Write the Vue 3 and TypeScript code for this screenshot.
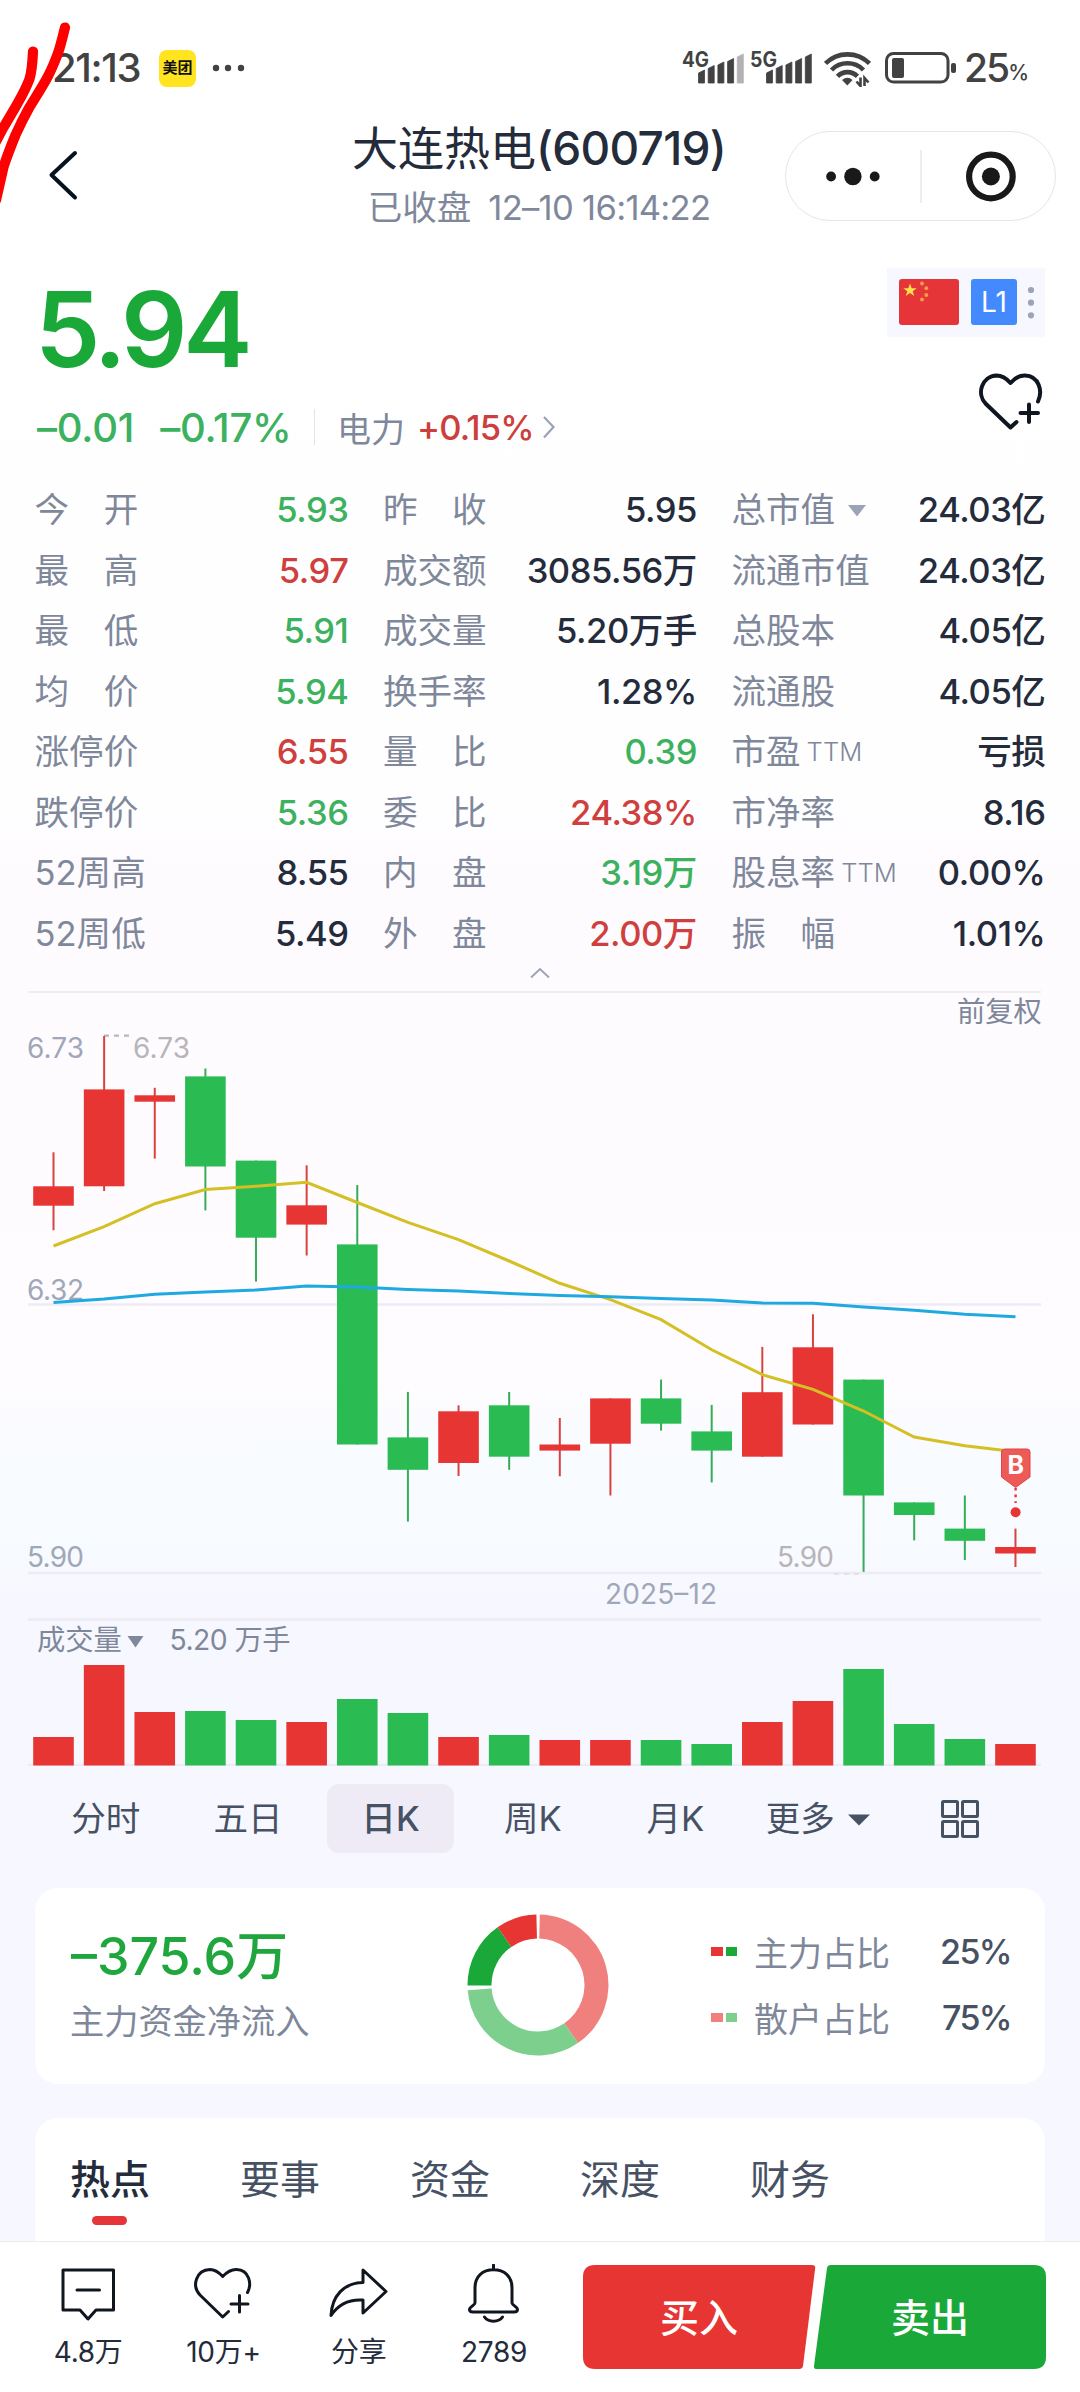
<script setup lang="ts">
type Tone = 'up' | 'down' | 'flat'

interface Stat {
  label: string
  value: string
  tone?: Tone
  suffix?: string
  menu?: boolean
}

interface Candle {
  up: boolean
  high: number
  top: number
  bottom: number
  low: number
  volume: number
}

const stats: Stat[] = [
  { label: '今　开', value: '5.93', tone: 'down' },
  { label: '昨　收', value: '5.95' },
  { label: '总市值', value: '24.03亿', menu: true },
  { label: '最　高', value: '5.97', tone: 'up' },
  { label: '成交额', value: '3085.56万' },
  { label: '流通市值', value: '24.03亿' },
  { label: '最　低', value: '5.91', tone: 'down' },
  { label: '成交量', value: '5.20万手' },
  { label: '总股本', value: '4.05亿' },
  { label: '均　价', value: '5.94', tone: 'down' },
  { label: '换手率', value: '1.28%' },
  { label: '流通股', value: '4.05亿' },
  { label: '涨停价', value: '6.55', tone: 'up' },
  { label: '量　比', value: '0.39', tone: 'down' },
  { label: '市盈', value: '亏损', suffix: 'TTM' },
  { label: '跌停价', value: '5.36', tone: 'down' },
  { label: '委　比', value: '24.38%', tone: 'up' },
  { label: '市净率', value: '8.16' },
  { label: '52周高', value: '8.55' },
  { label: '内　盘', value: '3.19万', tone: 'down' },
  { label: '股息率', value: '0.00%', suffix: 'TTM' },
  { label: '52周低', value: '5.49' },
  { label: '外　盘', value: '2.00万', tone: 'up' },
  { label: '振　幅', value: '1.01%' },
]

const c = (up: number, high: number, top: number, bottom: number, low: number, volume: number): Candle =>
  ({ up: up === 1, high, top, bottom, low, volume })

const candles: Candle[] = [
  c(1, 1152.3, 1186.3, 1205.7, 1230.2, 1737),
  c(1, 1036, 1089.4, 1186.3, 1191, 1665),
  c(1, 1087.8, 1095.3, 1101.7, 1158.6, 1712),
  c(0, 1068.5, 1076.4, 1166.5, 1210.4, 1711),
  c(0, 1160.6, 1160.6, 1237.7, 1281.6, 1720),
  c(1, 1165.3, 1205.3, 1224.6, 1255.5, 1722),
  c(0, 1185, 1244.4, 1444.5, 1444.5, 1699),
  c(0, 1391.9, 1437.4, 1469.8, 1521.6, 1713),
  c(1, 1405.3, 1411.3, 1463, 1476, 1737),
  c(0, 1391.9, 1405.3, 1456.7, 1469.8, 1735),
  c(1, 1418, 1444.5, 1450.6, 1476.3, 1740),
  c(1, 1398.4, 1398.4, 1443.7, 1495.5, 1740),
  c(0, 1379.6, 1398.4, 1423.7, 1430.6, 1740),
  c(0, 1404.9, 1431.4, 1450.6, 1482.4, 1744),
  c(1, 1346.9, 1392.2, 1456.7, 1456.7, 1722),
  c(1, 1314.3, 1347.3, 1424.5, 1424.5, 1701),
  c(0, 1379.6, 1379.6, 1495.5, 1571.8, 1669),
  c(0, 1502.4, 1502.4, 1515, 1540.4, 1724),
  c(0, 1495.5, 1528.6, 1540.8, 1560, 1739),
  c(1, 1528.6, 1547, 1553.5, 1567, 1744),
]

const xAt = (i: number): number => 53.5 + i * 50.63
const color = (up: boolean): string => (up ? '#e63532' : '#2bbb53')
const wick = (up: boolean): string => (up ? '#d8423f' : '#35ac55')

const toLine = (ys: number[]): string => ys.map((y, i) => `${xAt(i).toFixed(1)},${y}`).join(' ')

const shortAverage = toLine([
  1246, 1226.6, 1203.7, 1189.5, 1186.3, 1182.3, 1202.5, 1222.3, 1239.7, 1261,
  1283.3, 1299.6, 1319.6, 1349.8, 1374.7, 1389.4, 1411, 1437, 1445.7, 1451.8,
])
const longAverage = toLine([
  1302.5, 1299, 1294.2, 1291.9, 1289.9, 1285.9, 1287.1, 1289.5, 1291, 1293.4,
  1295.5, 1296.7, 1298.4, 1300, 1302.9, 1303.3, 1306.9, 1310.2, 1314.3, 1316.7,
])

const gridLines = [992, 1304.5, 1573, 1619.5, 1765]

const arc = (from: number, to: number): string => {
  const p = (deg: number, r: number): string => {
    const a = (deg * Math.PI) / 180
    return `${(71 + r * Math.sin(a)).toFixed(2)} ${(71 - r * Math.cos(a)).toFixed(2)}`
  }
  const large = to - from > 180 ? 1 : 0
  return `M${p(from, 70.5)}A70.5 70.5 0 ${large} 1 ${p(to, 70.5)}L${p(to, 46.5)}A46.5 46.5 0 ${large} 0 ${p(from, 46.5)}Z`
}

const donut = [
  { d: arc(1.5, 145.5), fill: '#f0807d' },
  { d: arc(145.5, 265.8), fill: '#7dcf8e' },
  { d: arc(269.5, 325), fill: '#1aa939' },
  { d: arc(325, 358.7), fill: '#e63532' },
]

const periods = ['分时', '五日', '日K', '周K', '月K']
const sections = ['热点', '要事', '资金', '深度', '财务']
const signalTops = [16, 11.5, 8, 4.5, 0]
</script>

<template>
  <div class="screen">
    <svg class="scribble" width="80" height="210" viewBox="0 0 80 210">
      <path d="M33 51.5C32.5 62 32 71 29.500 79C25 91 20 99 15.500 107L2 130L-8 149" />
      <path d="M65 27.500C62 39 60 49 56.500 57C53 66 51 71 46.500 79C41 89 35 98 29 108C24 117 20 125 15.500 135C11 146 7 156 3.500 167L-4 200" />
    </svg>

    <div class="status">
      <span class="time">21:13</span>
      <span class="app-badge">美团</span>
      <svg class="more" width="34" height="8" viewBox="0 0 34 8">
        <circle cx="4" cy="4" r="3.2" /><circle cx="16" cy="4" r="3.2" /><circle cx="29" cy="4" r="3.2" />
      </svg>
      <div class="status-right">
        <svg width="68" height="52" viewBox="-4 -8 68 52">
          <text x="0" y="17" class="net" textLength="27" lengthAdjust="spacingAndGlyphs">4G</text>
          <path v-for="(t, i) in signalTops" :key="i" :d="`M${16.500 + i * 9.700} ${t + 7}l6-3V33h-6Z`" :fill="i === 4 ? '#b3b1b4' : '#424242'" :stroke="i === 4 ? '#b3b1b4' : '#424242'" stroke-width="0.800" stroke-linejoin="round" />
        </svg>
        <svg width="68" height="52" viewBox="-4 -8 68 52">
          <text x="0" y="17" class="net" textLength="27" lengthAdjust="spacingAndGlyphs">5G</text>
          <path v-for="(t, i) in signalTops" :key="i" :d="`M${16.500 + i * 9.700} ${t + 7}l6-3V33h-6Z`" fill="#424242" stroke="#424242" stroke-width="0.800" stroke-linejoin="round" />
        </svg>
        <svg class="wifi" width="47" height="37" viewBox="0 0 47 37">
          <g fill="none" stroke="#424242" stroke-width="4.600">
            <path d="M1.500 13.500A31 31 0 0 1 45.500 13.500" />
            <path d="M7.500 20A22.500 22.500 0 0 1 39.500 20" />
            <path d="M13.500 26.300A14 14 0 0 1 33.500 26.300" />
          </g>
          <path d="M18 30Q23.500 25.500 28.500 30L23.300 35.500Z" fill="#424242" />
          <path d="M36 26.500V37M41 26.500V37" fill="none" stroke="#fff" stroke-width="6" />
          <path d="M36.500 27.500V36l-4-4.500M40.500 36V28l4 4.500" fill="none" stroke="#424242" stroke-width="2.600" />
        </svg>
        <svg class="battery" width="72" height="32" viewBox="0 0 72 32">
          <rect x="1.500" y="1.500" width="61.500" height="28.500" rx="7" fill="none" stroke="#424242" stroke-width="3" />
          <rect x="7" y="6" width="12" height="20" rx="2" fill="#424242" />
          <rect x="66" y="11" width="5" height="10" rx="2" fill="#424242" />
        </svg>
        <span class="level">25</span><span class="pct">%</span>
      </div>
    </div>

    <div class="header">
      <svg class="back" width="32" height="52" viewBox="0 0 32 52">
        <path d="M28 4L4.500 26L28 48.500" fill="none" stroke="#06121f" stroke-width="4" stroke-linecap="round" stroke-linejoin="round" />
      </svg>
      <div class="titles">
        <div class="title">大连热电<span>(600719)</span></div>
        <div class="subtitle">已收盘<span class="when">12–10 16:14:22</span></div>
      </div>
      <div class="capsule">
        <svg width="269" height="89" viewBox="785.500 132 269 89">
          <g fill="#191919">
            <circle cx="830.600" cy="176.500" r="4.900" /><circle cx="852.400" cy="176.500" r="8.700" /><circle cx="874.200" cy="176.500" r="4.900" />
            <circle cx="990.400" cy="176.500" r="9" />
          </g>
          <path d="M920.500 150V203" stroke="#e3e3e3" stroke-width="1.200" />
          <circle cx="990.400" cy="176.500" r="21.800" fill="none" stroke="#191919" stroke-width="6.200" />
        </svg>
      </div>
    </div>

    <div class="quote">
      <div class="quote-main">
        <div class="price">5.94</div>
        <div class="change">
          <span class="delta">–0.01</span>
          <span class="delta pctd">–0.17%</span>
          <i class="sep"></i>
          <span class="industry">电力</span>
          <span class="ind-change">+0.15%</span>
          <svg width="14" height="26" viewBox="0 0 14 26"><path d="M2 3L11.500 13L2 23.500" fill="none" stroke="#9aa2b5" stroke-width="2.200" /></svg>
        </div>
      </div>
      <div class="quote-side">
        <div class="marks">
          <svg class="flag" width="60" height="46" viewBox="0 0 60 46">
            <rect width="60" height="46" rx="3" fill="#e63538" />
            <path d="M11 4.500l1.700 4.700h5l-4 3 1.500 4.700-4.200-2.900-4.200 2.900 1.500-4.700-4-3h5Z" fill="#fde04a" />
            <g fill="#f0a04a"><circle cx="23" cy="4.500" r="1.900" /><circle cx="27.300" cy="9.200" r="1.900" /><circle cx="27.300" cy="16" r="1.900" /><circle cx="23" cy="20.500" r="1.900" /></g>
          </svg>
          <span class="level1">L1</span>
          <svg width="8" height="34" viewBox="0 0 8 34"><g fill="#9da4b7"><circle cx="4" cy="4" r="3.100" /><circle cx="4" cy="16.700" r="3.100" /><circle cx="4" cy="29.300" r="3.100" /></g></svg>
        </div>
        <svg class="heart" width="66" height="60" viewBox="977 371 66 60">
          <path d="M1038 401.500C1043 391 1039 376 1025 375.500C1018 375.300 1014 379 1010.500 383C1007 379 1003 375.500 996.500 375.500C982 376 976 394 986 404L1010.500 427.500L1016.500 422M1029 404.500V422M1020.500 413H1038" />
        </svg>
      </div>
    </div>

    <div class="stats">
      <div v-for="s in stats" :key="s.label" class="stat">
        <span class="label">{{ s.label }}<small v-if="s.suffix">{{ s.suffix }}</small>
          <svg v-if="s.menu" class="tri" width="18" height="12" viewBox="0 0 18 12"><path d="M0 0H18L9 11.500Z" fill="#9ba3b7" /></svg>
        </span>
        <span class="value" :class="s.tone">{{ s.value }}</span>
      </div>
    </div>

    <div class="fold">
      <svg width="22" height="12" viewBox="0 0 22 12"><path d="M2 10.500L11 2L20 10.500" fill="none" stroke="#9aa2b5" stroke-width="1.800" /></svg>
    </div>

    <svg class="chart" width="1080" height="775" viewBox="0 991 1080 775">
      <line v-for="(y, i) in gridLines" :key="y" x1="28" x2="1041" :y1="y" :y2="y" :stroke="i === 0 ? '#ece8ef' : '#edebf4'" :stroke-width="i === 0 ? 1.500 : 2.600" />
      <text x="957" y="1022" class="muted" font-size="28.300">前复权</text>

      <g class="axis">
        <text x="27" y="1058" textLength="57">6.73</text>
        <text x="27" y="1299.500" textLength="57">6.32</text>
        <text x="27" y="1566.500" textLength="57">5.90</text>
        <text x="605" y="1604" textLength="112">2025–12</text>
        <g fill="#b7b5b9">
          <text x="133" y="1058" textLength="57">6.73</text>
          <text x="777" y="1567" textLength="57">5.90</text>
        </g>
      </g>
      <path d="M104 1035.600H130" stroke="#b9b7bb" stroke-width="2.400" stroke-dasharray="5 5" />
      <path d="M834 1574H860" stroke="#dedce2" stroke-width="1.500" stroke-dasharray="5 5" />

      <g v-for="(k, i) in candles" :key="i">
        <line :x1="xAt(i)" :x2="xAt(i)" :y1="k.high" :y2="k.low" :stroke="wick(k.up)" stroke-width="2" />
        <rect :x="xAt(i) - 20.300" :y="k.top" width="40.600" :height="k.bottom - k.top" :fill="color(k.up)" />
        <rect :x="xAt(i) - 20.300" :y="k.volume" width="40.600" :height="1765.500 - k.volume" :fill="color(k.up)" />
      </g>

      <polyline :points="shortAverage" fill="none" stroke="#d4c024" stroke-width="3" />
      <polyline :points="longAverage" fill="none" stroke="#1eaae0" stroke-width="3" />

      <path d="M1005 1449H1027Q1030 1449 1030 1452V1477L1015.600 1487.500L1001.500 1477V1452Q1001.500 1449 1005 1449Z" fill="#ed5b58" stroke="#e14542" stroke-width="1" />
      <text x="1015.800" y="1473.500" class="buy-mark">B</text>
      <path d="M1015.600 1488V1503" stroke="#e63532" stroke-width="2.400" stroke-dasharray="2.600 4" />
      <circle cx="1015.600" cy="1512.300" r="5" fill="#e63532" />

      <text x="37" y="1650" class="muted" font-size="28.300">成交量</text>
      <path d="M127.500 1636H143.500L135.500 1647.500Z" fill="#7f889c" />
      <text x="169.500" y="1650" class="muted" font-size="28.300" textLength="121">5.20 万手</text>
    </svg>

    <div class="periods">
      <div v-for="p in periods" :key="p" class="period" :class="{ active: p === '日K' }"><span>{{ p }}</span></div>
      <div class="period more-menu"><span>更多</span><svg width="22" height="12" viewBox="0 0 22 12"><path d="M0 0.500H22L11 11.500Z" fill="#475164" /></svg></div>
      <div class="period">
        <svg width="40" height="40" viewBox="0 0 40 40" fill="none" stroke="#475164" stroke-width="3">
          <rect x="2.500" y="2.500" width="15" height="15" rx="1" /><rect x="22.500" y="2.500" width="15" height="15" rx="1" />
          <rect x="2.500" y="22.500" width="15" height="15" rx="1" /><rect x="22.500" y="22.500" width="15" height="15" rx="1" />
        </svg>
      </div>
    </div>

    <div class="flow">
      <div class="flow-left">
        <div class="flow-value">–375.6万</div>
        <div class="flow-label">主力资金净流入</div>
      </div>
      <svg class="donut" width="142" height="142" viewBox="0 0 142 142">
        <path v-for="s in donut" :key="s.fill" :d="s.d" :fill="s.fill" />
      </svg>
      <div class="legend">
        <div class="legend-row"><i class="sq r"></i><i class="sq g"></i><span class="lname">主力占比</span><span class="lval">25%</span></div>
        <div class="legend-row pale"><i class="sq r"></i><i class="sq g"></i><span class="lname">散户占比</span><span class="lval">75%</span></div>
      </div>
    </div>

    <div class="news">
      <div v-for="s in sections" :key="s" class="news-tab" :class="{ on: s === '热点' }">{{ s }}</div>
    </div>

    <div class="bottom">
      <div class="action">
        <svg width="60" height="60" viewBox="58.500 2264 60 60"><path d="M63.500 2270H114V2310H96.500L88.500 2319L80.500 2310H63.500ZM77.500 2290H100" /></svg>
        <span>4.8万</span>
      </div>
      <div class="action">
        <svg width="60" height="60" viewBox="194 2264 60 60"><path d="M248.500 2292.500C253 2284 250.500 2270 237.500 2269.500C231 2269.300 227 2273 223.700 2276.500C220.500 2273 216.500 2269.500 211 2269.500C197 2270 192.500 2286 201 2295L223.700 2317L229.500 2311.500M240.500 2295.500V2312M232 2304H249" /></svg>
        <span>10万+</span>
      </div>
      <div class="action">
        <svg width="60" height="60" viewBox="329.500 2264 60 60"><path d="M363.500 2270L386.500 2291.500L363.500 2313V2300C349 2299 339 2304 331.500 2315.500C332.500 2296 344 2283 363.500 2282.500Z" /></svg>
        <span>分享</span>
      </div>
      <div class="action">
        <svg width="60" height="60" viewBox="464 2264 60 60"><path d="M493.500 2265V2269.500M475 2303V2288C475 2276 483 2269.800 493.500 2269.800S512 2276 512 2288V2303C512 2305 517.500 2307 517.500 2309.500Q517.500 2312 514 2312H473Q469.500 2312 469.500 2309.500C469.500 2307 475 2305 475 2303ZM484.500 2317C488 2322.500 499 2322.500 502.500 2317" /></svg>
        <span>2789</span>
      </div>
      <svg class="trade" width="466" height="106" viewBox="582 2264 466 106">
        <path d="M595 2265H812Q815.500 2265 815.200 2268L803 2366Q802.500 2369 799 2369H595Q583 2369 583 2357V2277Q583 2265 595 2265Z" fill="#e63532" />
        <path d="M831 2265H1034Q1046 2265 1046 2277V2357Q1046 2369 1034 2369H817Q813.500 2369 814 2366L827 2268Q827.500 2265 831 2265Z" fill="#1aa939" />
        <text x="699" y="2331.500">买入</text>
        <text x="930" y="2331.500">卖出</text>
      </svg>
    </div>
  </div>
</template>

<style>
body {
  margin: 0;
}
</style>

<style scoped>
.screen {
  position: relative;
  width: 1080px;
  height: 2392px;
  overflow: hidden;
  font-family: Inter, "Noto Sans CJK SC", sans-serif;
  color: #242b3b;
  background: linear-gradient(#fff 0, #fefeff 800px, #fefbff 880px, #fefcff 1380px, #f8fbff 1460px, #f7fafe 1550px, #f7f8ff 1600px, #f7f8ff 100%);
  white-space: nowrap;
}

svg {
  display: block;
  flex: none;
}

.scribble {
  position: absolute;
  left: 0;
  top: 0;
  z-index: 2;
}

.scribble path {
  fill: none;
  stroke: #fe0000;
  stroke-width: 10.2px;
  stroke-linecap: round;
}

.status {
  display: flex;
  align-items: center;
  box-sizing: border-box;
  height: 119px;
  padding: 17px 51px 0 52px;
  color: #424242;
}

.time {
  width: 107px;
  font-size: 40px;
  font-weight: 500;
  line-height: 60px;
  letter-spacing: -1.4px;
}

.app-badge {
  width: 37px;
  height: 37px;
  border-radius: 8px;
  background: #ffe41f;
  color: #111;
  font-size: 15px;
  font-weight: 700;
  line-height: 36px;
  text-align: center;
}

.more {
  margin-left: 16px;
  fill: #424242;
}

.status-right {
  display: flex;
  align-items: center;
  margin-left: auto;
}

.net {
  font-size: 21px;
  font-weight: 700;
  fill: #424242;
}

.wifi {
  margin-left: 10px;
}

.battery {
  margin-left: 14px;
}

.level {
  margin-left: 7px;
  font-size: 39px;
  font-weight: 500;
  line-height: 60px;
  letter-spacing: -2px;
}

.pct {
  padding-top: 9px;
  font-size: 21px;
  font-weight: 500;
}

.header {
  display: flex;
  height: 121px;
}

.back {
  margin: 30px 0 0 47px;
}

.titles {
  width: 474px;
  margin-left: 223px;
  text-align: center;
}

.title {
  font-size: 46px;
  line-height: 58px;
}

.title span {
  font-weight: 500;
  letter-spacing: -0.7px;
}

.subtitle {
  margin-top: 1px;
  font-size: 34.56px;
  line-height: 60px;
  color: #7f889b;
}

.when {
  margin-left: 17px;
  letter-spacing: -0.7px;
}

.capsule {
  width: 269px;
  height: 88px;
  margin: 12px 0 0 9px;
  border: 1px solid #e6e6e6;
  border-radius: 45px;
}

.quote {
  display: flex;
  justify-content: space-between;
  height: 239px;
  padding: 0 35px;
}

.price {
  margin-top: 36px;
  font-size: 104px;
  font-weight: 600;
  line-height: 106px;
  letter-spacing: -4.4px;
  color: #1aa939;
}

.change {
  display: flex;
  align-items: center;
  height: 60px;
  margin-top: 15px;
  padding-left: 2px;
}

.delta {
  font-size: 40px;
  font-weight: 500;
  letter-spacing: -0.2px;
  color: #3cb15e;
}

.pctd {
  margin-left: 26px;
}

.sep {
  width: 1.5px;
  height: 36px;
  margin-left: 22px;
  background: #e3e4ea;
}

.industry {
  margin-left: 22px;
  font-size: 34px;
  color: #7f889b;
}

.ind-change {
  margin: 0 8px 0 12px;
  font-size: 34.56px;
  font-weight: 500;
  letter-spacing: -0.9px;
  color: #cd3f3d;
}

.quote-side {
  display: flex;
  flex-direction: column;
  align-items: flex-end;
}

.marks {
  display: flex;
  align-items: center;
  box-sizing: border-box;
  width: 158px;
  height: 69px;
  margin-top: 28px;
  padding-left: 12px;
  background: #f6f7ff;
}

.marks .flag {
  margin-top: -1px;
}

.level1 {
  width: 46px;
  height: 46px;
  margin: -1px 10px 0 12px;
  border-radius: 3px;
  background: #438afe;
  color: #fff;
  font-size: 28px;
  line-height: 46px;
  text-align: center;
}

.heart {
  margin: 34px 2px 0 0;
  fill: none;
  stroke: #101620;
  stroke-width: 4px;
  stroke-linecap: round;
  stroke-linejoin: round;
}

.stats {
  display: grid;
  grid-template-columns: repeat(3, 1fr);
  grid-auto-rows: 60.48px;
  column-gap: 34.56px;
  box-sizing: border-box;
  height: 484px;
  padding: 1.3px 34.56px 0;
  font-size: 34.56px;
  line-height: 60.48px;
}

.stat {
  display: flex;
  justify-content: space-between;
}

.label {
  display: flex;
  align-items: center;
  color: #7f889b;
}

.label small {
  margin-left: 6px;
  font-size: 25.6px;
  font-weight: 300;
}

.tri {
  margin-left: 13px;
}

.value {
  font-weight: 500;
  letter-spacing: -0.45px;
}

.up {
  color: #cf3f3d;
}

.down {
  color: #3cb15e;
}

.fold {
  display: flex;
  justify-content: center;
  height: 24px;
  padding-top: 4px;
}

.chart text {
  font-family: Inter, "Noto Sans CJK SC", sans-serif;
}

.chart .muted {
  fill: #7f889b;
}

.axis {
  font-size: 28px;
  fill: #a0a7b9;
}

.chart .buy-mark {
  font-size: 25px;
  font-weight: 700;
  fill: #fff;
  text-anchor: middle;
}

.periods {
  display: grid;
  grid-template-columns: repeat(7, 142.4px);
  height: 69px;
  margin: 18px 0 0 34.56px;
}

.period {
  display: flex;
  align-items: center;
  justify-content: center;
  font-size: 34.56px;
  line-height: 69px;
  color: #475164;
}

.active span {
  width: 127px;
  border-radius: 12px;
  background: #efebf6;
  font-weight: 500;
  text-align: center;
}

.more-menu svg {
  margin: 2px 0 0 13px;
}

.flow {
  display: flex;
  box-sizing: border-box;
  width: 1010px;
  height: 196px;
  margin: 35px 0 0 35px;
  border-radius: 23px;
  background: #fff;
}

.flow-left {
  width: 396px;
  padding: 34px 0 0 36px;
}

.flow-value {
  font-size: 51.84px;
  font-weight: 500;
  line-height: 70px;
  color: #1fa73d;
}

.flow-label {
  margin-left: -1px;
  font-size: 34.2px;
  line-height: 60px;
  color: #7f889b;
}

.donut {
  margin-top: 26px;
}

.legend {
  flex: 1;
  padding: 30px 34px 0 102px;
}

.legend-row {
  display: flex;
  align-items: center;
  height: 66px;
  font-size: 34px;
}

.sq {
  width: 11.5px;
  height: 9px;
  margin-right: 3px;
}

.sq.r {
  background: #e63532;
}

.sq.g {
  background: #1aa939;
}

.pale .r {
  background: #f0807d;
}

.pale .g {
  background: #7dcf8e;
}

.lname {
  margin-left: 14px;
  color: #7f889b;
}

.lval {
  margin-left: auto;
  color: #475164;
  font-weight: 500;
  letter-spacing: -1.6px;
}

.news {
  display: flex;
  gap: 90px;
  box-sizing: border-box;
  width: 1010px;
  height: 123px;
  margin: 34px 0 0 35px;
  padding: 27px 0 0 35px;
  border-radius: 23px 23px 0 0;
  background: #fff;
}

.news-tab {
  font-size: 40px;
  line-height: 70px;
  color: #475164;
}

.on {
  color: #242b3b;
  font-weight: 500;
}

.on::after {
  content: "";
  display: block;
  width: 35px;
  height: 9px;
  margin: 1px 0 0 22px;
  border-radius: 4.5px;
  background: #e63538;
}

.bottom {
  display: flex;
  box-sizing: border-box;
  height: 151px;
  padding-left: 20.5px;
  border-top: 1.5px solid #ebebee;
  background: #fff;
}

.action {
  display: flex;
  flex-direction: column;
  align-items: center;
  width: 135.3px;
  padding-top: 22px;
  font-size: 28px;
  line-height: 40px;
}

.action span {
  margin-top: 8px;
  letter-spacing: -0.3px;
}

.action svg {
  fill: none;
  stroke: #101620;
  stroke-width: 3px;
  stroke-linecap: round;
  stroke-linejoin: round;
}

.trade {
  margin: 22px 0 0 20px;
}

.trade text {
  font-family: "Noto Sans CJK SC", sans-serif;
  font-size: 39px;
  font-weight: 500;
  fill: #fff;
  text-anchor: middle;
}
</style>
